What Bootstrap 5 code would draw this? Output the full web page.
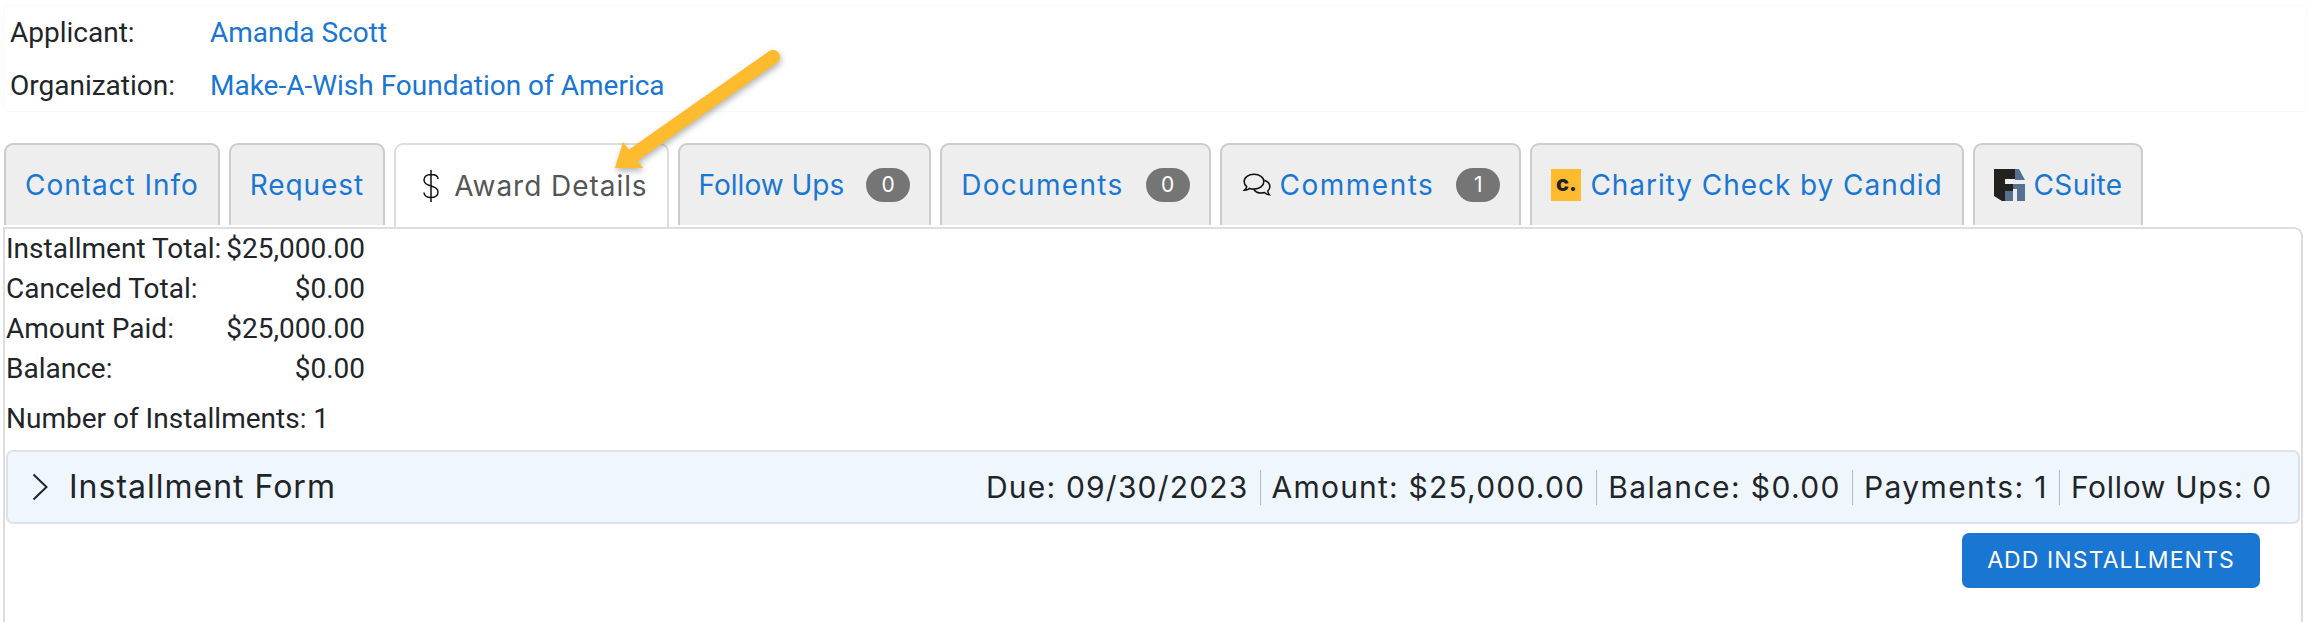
<!DOCTYPE html>
<html lang="en">
  <head>
    <meta charset="UTF-8" />
    <title>Award Details</title>
    <link href="https://cdn.jsdelivr.net/npm/bootstrap@5.3.3/dist/css/bootstrap.min.css" rel="stylesheet" />
    <style>
      body { font-family: Roboto, "Liberation Sans", sans-serif; font-size: 28px; color: #212529; height: 622px; overflow: hidden; position: relative; }
      a { color: #1976d2; text-decoration: none; }
      .head-box { margin: 5px 0 0 3px; height: 107px; border: 1px solid #f8f8f8; border-radius: 6px; padding: 0 6px; }
      .head-row { height: 53px; align-items: center; }
      .head-label { width: 200px; }
      .tab-bar { margin: 31px 0 0 4px; gap: 9px; border: 0; height: 82px; flex-wrap: nowrap; }
      .tab-bar .nav-link { height: 82px; margin: 0; padding: 0 19px; display: flex; align-items: center; background: #eee; color: #1976d2; border: 2px solid #ccc; border-bottom: 0; border-radius: 9px 9px 0 0; font-family: Inter, sans-serif; font-size: 28px; letter-spacing: .95px; white-space: nowrap; }
      .tab-bar .nav-link.active { height: 84px; background: #fff; color: #555; position: relative; z-index: 2; border-color: #ddd; }
      .tab-bar .nav-link.tight-text { letter-spacing: 0; }
      .tab-bar .nav-link.roomy-text { letter-spacing: 1.3px; }
      .tab-bar .nav-link.loose-text { letter-spacing: 1.5px; }
      .tab-bar .nav-link.short-text { letter-spacing: .3px; }
      .tab-count { background: #757575; font-family: Inter, sans-serif; font-size: 21px; font-weight: 400; letter-spacing: 0; padding: 0; width: 44px; height: 34px; line-height: 34px; margin-left: 22px; }
      .dollar-icon { margin: 0 14px 0 7px; }
      .talk-icon { margin-right: 7px; }
      .candid-mark { width: 30px; height: 32px; background: #fdbb2d; color: #222; font-size: 22px; font-weight: 800; line-height: 29px; text-align: center; letter-spacing: 0; margin-right: 9px; }
      .suite-icon { margin-right: 9px; }
      .tab-panel { margin: 2px 5px 0 3px; height: 400px; border: 2px solid #ddd; border-bottom: 0; border-radius: 0 9px 0 0; padding: 0 1px; }
      .total-grid { display: grid; grid-template-columns: 214px 145px; grid-auto-rows: 40px; align-items: center; white-space: nowrap; }
      .total-grid div:nth-child(even) { text-align: right; }
      .count-line { height: 40px; margin-top: 10px; display: flex; align-items: center; }
      .inst-form { margin-top: 11px; }
      .inst-form .accordion-item { border: 0; background: none; }
      .inst-form .accordion-button { height: 74px; padding: 0 26px 0 24px; background: #f0f6fe; color: #212529; border: 2px solid #dee2e6; border-radius: 7px !important; box-shadow: none; font-family: Inter, sans-serif; }
      .inst-form .accordion-button::after { display: none; }
      .inst-title { font-size: 32px; margin-left: 21px; letter-spacing: 1px; }
      .inst-meta { font-size: 30px; letter-spacing: 1.2px; white-space: nowrap; }
      .inst-meta span { padding: 0 11px; border-right: 1px solid #bbb; line-height: 35px; }
      .inst-meta span.wide-item { letter-spacing: 1.4px; }
      .inst-meta span:last-child { border: 0; padding-right: 0; letter-spacing: .7px; }
      .add-btn { background: #1976d2; border: 0; border-radius: 7px; width: 298px; height: 55px; font-family: Inter, sans-serif; font-size: 23px; letter-spacing: 1.1px; padding: 0; margin: 9px 40px 0 0; }
      .note-arrow { position: absolute; left: 600px; top: 40px; z-index: 5; filter: drop-shadow(1px 3px 3px rgba(0,0,0,.3)); }
    </style>
  </head>
  <body>
    <div class="head-box">
      <div class="d-flex head-row"><div class="head-label">Applicant:</div><a href="#">Amanda Scott</a></div>
      <div class="d-flex head-row"><div class="head-label">Organization:</div><a href="#">Make-A-Wish Foundation of America</a></div>
    </div>

    <ul class="nav nav-tabs tab-bar">
      <li class="nav-item"><a class="nav-link" href="#">Contact Info</a></li>
      <li class="nav-item"><a class="nav-link" href="#">Request</a></li>
      <li class="nav-item">
        <a class="nav-link active" href="#">
          <svg class="dollar-icon" width="18" height="32" viewBox="0 0 18 32" fill="none" stroke="#111" stroke-width="1.500"><path d="M16 9c0-3-3-4.500-7-4.500S2 6.500 2 10s3 5 7 6 7 2.500 7 6-3 5.500-7 5.500S2 25.500 2 22.500M9 0v32" /></svg>
          Award Details
        </a>
      </li>
      <li class="nav-item"><a class="nav-link tight-text" href="#">Follow Ups <span class="badge rounded-pill tab-count">0</span></a></li>
      <li class="nav-item"><a class="nav-link roomy-text" href="#">Documents <span class="badge rounded-pill tab-count">0</span></a></li>
      <li class="nav-item">
        <a class="nav-link loose-text" href="#">
          <svg class="talk-icon" width="32" height="24" viewBox="0 0 33 28" fill="none" stroke="#111" stroke-width="1.800"><path d="M13 1.500C6.500 1.500 1.500 5 1.500 10c0 2.500 1.200 4.500 3 6-.2 1.500-1 2.800-2.500 4 2.500 0 4.500-.8 6-2 1.500.5 3 .8 5 .8 6.500 0 11.500-3.800 11.500-8.800S19.500 1.500 13 1.500z" /><path d="M25 8.500c3.800 1.300 6.500 4 6.500 7.500 0 2-1 3.800-2.500 5 .2 1.800 1 3.200 2 4.500-2.500-.3-4.500-1.300-5.800-2.700-1.200.4-2.500.6-3.700.6-3.800 0-6.800-1.400-8.500-3.900" /></svg>
          Comments <span class="badge rounded-pill tab-count">1</span>
        </a>
      </li>
      <li class="nav-item"><a class="nav-link" href="#"><span class="candid-mark">c.</span>Charity Check by Candid</a></li>
      <li class="nav-item">
        <a class="nav-link short-text" href="#">
          <svg class="suite-icon" width="31" height="32" viewBox="0 0 31 32"><path fill="#24221f" d="M0 0h21v10H11v5h8v7h-8v10H8l-8-5z" /><path fill="#56708f" d="M21 0h4l6 11H21zM19 15h12v17h-8V20h-4zM11 22h8v10h-8z" /></svg>
          CSuite
        </a>
      </li>
    </ul>

    <div class="tab-panel">
      <div class="total-grid">
        <div>Installment Total:</div><div>$25,000.00</div>
        <div>Canceled Total:</div><div>$0.00</div>
        <div>Amount Paid:</div><div>$25,000.00</div>
        <div>Balance:</div><div>$0.00</div>
      </div>
      <div class="count-line">Number of Installments: 1</div>
      <div class="accordion inst-form">
        <div class="accordion-item">
          <button class="accordion-button collapsed d-flex justify-content-between" type="button">
            <span class="d-flex align-items-center">
              <svg width="16" height="28" viewBox="0 0 16 28" fill="none" stroke="#212529" stroke-width="2"><path d="M1.500 1.500 14.500 14 1.500 26.500" /></svg>
              <span class="inst-title">Installment Form</span>
            </span>
            <span class="inst-meta d-flex">
              <span>Due: 09/30/2023</span><span>Amount: $25,000.00</span><span class="wide-item">Balance: $0.00</span><span class="wide-item">Payments: 1</span><span>Follow Ups: 0</span>
            </span>
          </button>
        </div>
      </div>
      <div class="d-flex justify-content-end">
        <button class="btn btn-primary add-btn" type="button">ADD INSTALLMENTS</button>
      </div>
    </div>

    <svg class="note-arrow" width="190" height="140" viewBox="0 0 190 140" fill="none">
      <path d="M173 17 32 116" stroke="#fdbb2d" stroke-width="14" stroke-linecap="round" />
      <path d="M15 128 23 102 43 128z" fill="#fdbb2d" />
    </svg>

    <script src="https://cdn.jsdelivr.net/npm/bootstrap@5.3.3/dist/js/bootstrap.bundle.min.js"></script>
  </body>
</html>
